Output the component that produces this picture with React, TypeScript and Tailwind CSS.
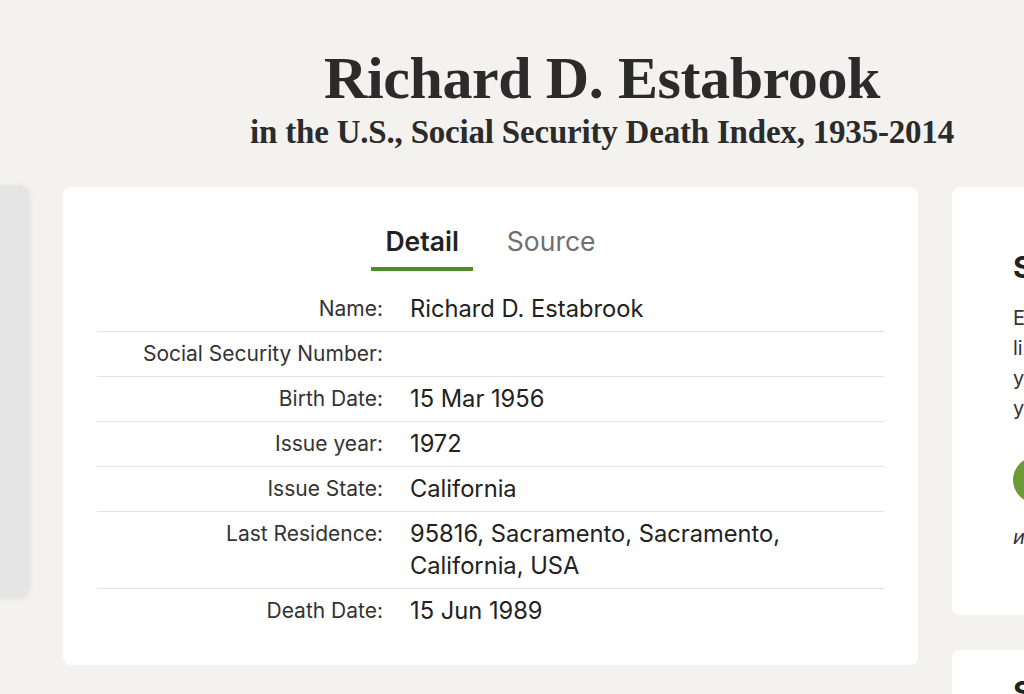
const rows: { label: string; value: string[] }[] = [
  { label: 'Name:', value: ['Richard D. Estabrook'] },
  { label: 'Social Security Number:', value: [] },
  { label: 'Birth Date:', value: ['15 Mar 1956'] },
  { label: 'Issue year:', value: ['1972'] },
  { label: 'Issue State:', value: ['California'] },
  { label: 'Last Residence:', value: ['95816, Sacramento, Sacramento,', 'California, USA'] },
  { label: 'Death Date:', value: ['15 Jun 1989'] },
];

function DetailRow({ label, value, last }: { label: string; value: string[]; last: boolean }) {
  return (
    <div className={`flex py-[6px] ${last ? '' : 'border-b border-[#e2e2e2]'}`}>
      <div className="w-[286px] shrink-0 text-right text-[21px] leading-[32px] text-[#333]">{label}</div>
      <div className="pl-[27px] text-[23.7px] leading-[32px] text-[#222]">
        {value.length ? value.map((v) => <div key={v}>{v}</div>) : <div>&nbsp;</div>}
      </div>
    </div>
  );
}

export default function App() {
  return (
    <div
      className="h-[694px] w-[1024px] overflow-hidden bg-[#f4f2ef]"
      style={{ fontFamily: 'Inter, "Noto Sans", sans-serif' }}
    >
      {/* Title */}
      <header
        className="pl-[180px] pt-[48px] text-center text-[#2b2b2b]"
        style={{ fontFamily: '"Liberation Serif", "DejaVu Serif", serif' }}
      >
        <h1 className="text-[60px] font-bold leading-[60px] tracking-[-0.4px]">Richard D. Estabrook</h1>
        <h2 className="mt-[6px] whitespace-nowrap text-[33px] font-bold leading-[36px] tracking-[-0.2px]">
          in the U.S., Social Security Death Index, 1935-2014
        </h2>
      </header>

      <div className="mt-[37px] flex items-start">
        {/* Left panel */}
        <div className="-ml-[200px] mt-[-2px] h-[413px] w-[230px] shrink-0 rounded-xl bg-[#e5e5e5] shadow-[0_1px_4px_rgba(0,0,0,0.08)]" />

        {/* Record card */}
        <div className="ml-[33px] w-[855px] shrink-0 rounded-lg bg-white px-[34px] pb-[32px] pt-[38px]">
          <div className="flex justify-center gap-[20px]">
            <div className="border-b-4 border-[#4e8b2b] px-[14px] pb-[10px] text-[26.5px] font-semibold leading-[32px] text-[#222]">
              Detail
            </div>
            <div className="border-b-4 border-transparent px-[14px] pb-[10px] text-[26.5px] leading-[32px] text-[#6f6f6f]">
              Source
            </div>
          </div>
          <div className="mt-[16px]">
            {rows.map((r, i) => (
              <DetailRow key={r.label} label={r.label} value={r.value} last={i === rows.length - 1} />
            ))}
          </div>
        </div>

        {/* Right column */}
        <div className="ml-[34px] flex w-[300px] shrink-0 flex-col gap-[35px]">
          <div className="h-[428px] rounded-lg bg-white pl-[61px] pt-[62px]">
            <div className="text-[30px] font-bold leading-[36px] text-[#222]">See more</div>
            <div className="mt-[18px] text-[20px] leading-[30px] text-[#333]">
              <div>Explore</div>
              <div>linked</div>
              <div>your</div>
              <div>your</div>
            </div>
            <div className="mt-[34px] h-[46px] w-[160px] rounded-full bg-[#6a9b35]" />
            <div className="mt-[20px] text-[20px] italic leading-[28px] text-[#333]">и</div>
          </div>
          <div className="h-[80px] rounded-lg bg-white pl-[61px] pt-[24px]">
            <div className="text-[30px] font-bold leading-[36px] text-[#222]">Save</div>
          </div>
        </div>
      </div>
    </div>
  );
}
